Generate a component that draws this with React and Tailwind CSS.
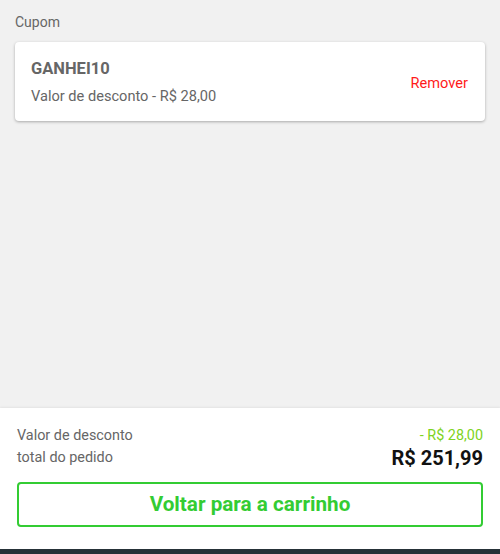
import React from "react";

const App = () => {
  return (
    <div className="flex h-[554px] w-full flex-col bg-[#f1f1f1] font-['Roboto',sans-serif]">
      {/* coupon area */}
      <div className="flex-1 px-[15px] pt-3">
        <div className="text-[14px] leading-5 text-[#666]">Cupom</div>
        <div className="mt-[10px] flex items-center justify-between rounded-[4px] bg-white pb-[15px] pl-4 pr-[17px] pt-[17px] shadow-[0_1px_3px_rgba(0,0,0,0.3)]">
          <div>
            <div className="text-[16.5px] font-bold leading-5 text-[#666]">GANHEI10</div>
            <div className="mt-[7px] text-[14.6px] leading-5 text-[#666]">Valor de desconto - R$ 28,00</div>
          </div>
          <button className="text-[14.6px] leading-5 text-[#ff1a1a]">Remover</button>
        </div>
      </div>

      {/* summary */}
      <div className="bg-white px-[17px] pb-[22px] pt-[18px] shadow-[0_-1px_2px_rgba(0,0,0,0.06)]">
        <div className="flex items-center justify-between text-[14.4px] leading-5">
          <span className="text-[#666]">Valor de desconto</span>
          <span className="text-[#7ed321]">- R$ 28,00</span>
        </div>
        <div className="flex items-center justify-between">
          <span className="text-[14.4px] leading-5 text-[#666]">total do pedido</span>
          <span className="text-[20px] font-bold leading-6 text-[#111]">R$ 251,99</span>
        </div>
        <button className="mt-3 flex h-[45px] w-full items-center justify-center rounded-[4px] border-2 border-[#33cc33] text-[20.7px] font-bold text-[#33cc33]">
          Voltar para a carrinho
        </button>
      </div>
      <div className="h-[5px] bg-[#263238]" />
    </div>
  );
};

export default App;
